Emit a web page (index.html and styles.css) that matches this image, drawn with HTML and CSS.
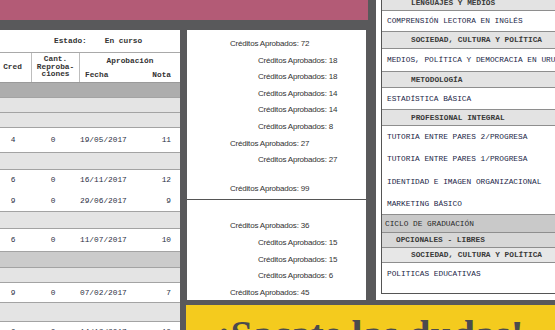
FILE: index.html
```html
<!DOCTYPE html>
<html lang="es">
<head>
<meta charset="utf-8">
<title>Escolaridad</title>
<link rel="stylesheet" href="styles.css">
</head>
<body>
<div class="page">
  <div class="banner"></div>

  <section class="left">
    <div class="estado"><span>Estado:</span><span>En curso</span></div>
    <div class="thead">
      <div class="th cred">Cred</div>
      <div class="th cant">Cant.<br>Reproba-<br>ciones</div>
      <div class="th aprob">
        <div class="aprob-title">Aprobación</div>
        <div class="aprob-sub"><span>Fecha</span><span>Nota</span></div>
      </div>
    </div>
    <div class="row g-dark h15"></div>
    <div class="row g-light h15"></div>
    <div class="row g-light h15"></div>
    <div class="row course h25"><span class="c1">4</span><span class="c2">0</span><span class="c3">19/05/2017</span><span class="c4">11</span></div>
    <div class="row g-light h17"></div>
    <div class="row course cont h20"><span class="c1">6</span><span class="c2">0</span><span class="c3">16/11/2017</span><span class="c4">12</span></div>
    <div class="row course h22"><span class="c1">9</span><span class="c2">0</span><span class="c3">29/06/2017</span><span class="c4">9</span></div>
    <div class="row g-light h17"></div>
    <div class="row course h23"><span class="c1">6</span><span class="c2">0</span><span class="c3">11/07/2017</span><span class="c4">10</span></div>
    <div class="row g-mid h16"></div>
    <div class="row g-light h15"></div>
    <div class="row course h20"><span class="c1">9</span><span class="c2">0</span><span class="c3">07/02/2017</span><span class="c4">7</span></div>
    <div class="row g-light h19"></div>
    <div class="row course h20"><span class="c1">6</span><span class="c2">0</span><span class="c3">14/12/2017</span><span class="c4">10</span></div>
  </section>

  <section class="mid">
    <div class="block first">
      <p class="l1">Créditos Aprobados: 72</p>
      <p class="l2">Créditos Aprobados: 18</p>
      <p class="l2">Créditos Aprobados: 18</p>
      <p class="l2">Créditos Aprobados: 14</p>
      <p class="l2">Créditos Aprobados: 14</p>
      <p class="l2">Créditos Aprobados: 8</p>
      <p class="l1">Créditos Aprobados: 27</p>
      <p class="l2">Créditos Aprobados: 27</p>
      <p class="l1 total">Créditos Aprobados: 99</p>
    </div>
    <div class="block second">
      <p class="l1">Créditos Aprobados: 36</p>
      <p class="l2">Créditos Aprobados: 15</p>
      <p class="l2">Créditos Aprobados: 15</p>
      <p class="l2">Créditos Aprobados: 6</p>
      <p class="l1">Créditos Aprobados: 45</p>
    </div>
  </section>

  <section class="right">
    <div class="rtable">
      <div class="r hd h16">LENGUAJES Y MEDIOS</div>
      <div class="r it h21">COMPRENSIÓN LECTORA EN INGLÉS</div>
      <div class="r hd h17">SOCIEDAD, CULTURA Y POLÍTICA</div>
      <div class="r it h23">MEDIOS, POLÍTICA Y DEMOCRACIA EN URUGUAY</div>
      <div class="r hd h16">METODOLOGÍA</div>
      <div class="r it h22">ESTADÍSTICA BÁSICA</div>
      <div class="r hd h16">PROFESIONAL INTEGRAL</div>
      <div class="r it cont h22">TUTORIA ENTRE PARES 2/PROGRESA</div>
      <div class="r it cont h23">TUTORIA ENTRE PARES 1/PROGRESA</div>
      <div class="r it cont h22">IDENTIDAD E IMAGEN ORGANIZACIONAL</div>
      <div class="r it h22">MARKETING BÁSICO</div>
      <div class="r ciclo h18">CICLO DE GRADUACIÓN</div>
      <div class="r opc h15">OPCIONALES - LIBRES</div>
      <div class="r hd soc h15">SOCIEDAD, CULTURA Y POLÍTICA</div>
      <div class="r it last h30">POLITICAS EDUCATIVAS</div>
    </div>
  </section>

  <div class="yellow"><span>¡Sacate las dudas!</span></div>
</div>
</body>
</html>
```

FILE: styles.css
```css
* {
  box-sizing: border-box;
  margin: 0;
  padding: 0;
}

html, body {
  width: 555px;
  height: 330px;
  overflow: hidden;
}

body {
  background: #59595b;
  font-family: "Liberation Mono", "Courier New", monospace;
}

.page {
  display: grid;
  grid-template-columns: 180px 7px 179px 10px 1fr;
  grid-template-rows: 20px 10px 270px 5px 1fr;
  width: 555px;
  height: 330px;
}

.banner {
  grid-row: 1;
  grid-column: 1 / 4;
  margin-right: -2px;
  background: #b35b76;
}

/* ---------- left table ---------- */
.left {
  grid-row: 3 / 6;
  grid-column: 1;
  background: #fff;
  overflow: hidden;
  font-size: 7.8px;
  color: #2b2f45;
}

.estado {
  height: 23px;
  display: flex;
  align-items: center;
  gap: 18px;
  padding-left: 54px;
  border-bottom: 1px solid #a9a9a9;
  font-weight: bold;
  color: #333;
}

.thead {
  height: 30px;
  display: grid;
  grid-template-columns: 32px 48px 1fr;
  border-bottom: 1px solid #9a9a9a;
  font-weight: bold;
  color: #333;
}

.th {
  line-height: 7.5px;
}

.cred {
  display: flex;
  align-items: center;
  justify-content: center;
  padding-right: 6px;
  border-right: 1px solid #bdbdbd;
}

.cant {
  display: flex;
  align-items: center;
  justify-content: center;
  text-align: center;
  border-right: 1px solid #bdbdbd;
}

.aprob {
  padding-top: 4px;
}

.aprob-title {
  line-height: 9px;
  text-align: center;
}

.aprob-sub {
  margin-top: 5px;
  line-height: 9px;
  display: flex;
  justify-content: space-between;
  padding: 0 9px 0 5px;
}

.row {
  display: grid;
  grid-template-columns: 26px 54px 1fr 40px;
  align-items: center;
  border-bottom: 1px solid #a3a3a3;
}

.row.cont {
  border-bottom-color: transparent;
}

.g-dark { background: #adadad; }
.g-mid { background: #cbcbcb; }
.g-light { background: #e4e4e4; }
.course { background: #fff; }

.c1, .c2 { text-align: center; }
.c4 { text-align: right; padding-right: 9px; }

.h15 { height: 15px; }
.h16 { height: 16px; }
.h17 { height: 17px; }
.h18 { height: 18px; }
.h19 { height: 19px; }
.h20 { height: 20px; }
.h21 { height: 21px; }
.h22 { height: 22px; }
.h23 { height: 23px; }
.h25 { height: 25px; }
.h30 { height: 30px; }

/* ---------- middle ---------- */
.mid {
  grid-row: 3;
  grid-column: 3;
  background: #fff;
  font-family: "Liberation Sans", Arial, sans-serif;
  font-size: 8px;
  letter-spacing: -0.2px;
  color: #333;
  overflow: hidden;
}

.block p {
  line-height: 16.6px;
  white-space: nowrap;
}

.block.first {
  padding: 6px 0 2px;
  border-bottom: 1px solid #555;
}

.block.second {
  padding-top: 18px;
}

.l1 { padding-left: 43px; }
.l2 { padding-left: 71px; }
.total { margin-top: 12px; }

/* ---------- right ---------- */
.right {
  grid-row: 1 / 4;
  grid-column: 5;
  background: #fff;
  padding: 0 0 6px 5px;
  overflow: hidden;
  font-size: 7.8px;
}

.rtable {
  margin-top: -5px;
  border-left: 1px solid #555;
  border-bottom: 1px solid #555;
  display: flex;
  flex-direction: column;
  white-space: nowrap;
}

.r {
  display: flex;
  align-items: center;
  border-bottom: 1px solid #8e8e8e;
}

.r.cont, .r.last {
  border-bottom-color: transparent;
}

.r.last {
  align-items: flex-start;
  padding-top: 6px;
  line-height: 10px;
}

.hd {
  background: #e3e3e3;
  padding-left: 29px;
  font-weight: bold;
  color: #3a3a3a;
}

.it {
  padding-left: 5px;
  color: #1d2748;
}

.ciclo {
  background: #c9c9c9;
  padding-left: 3px;
  color: #2a2a2a;
}

.opc {
  background: #d7d7d7;
  padding-left: 14px;
  font-weight: bold;
  color: #3a3a3a;
}

.hd.soc {
  background: #e7e7e7;
}

/* ---------- yellow banner ---------- */
.yellow {
  grid-row: 5;
  grid-column: 3 / 6;
  margin-left: -1px;
  background: #f4cb1e;
  overflow: hidden;
  text-align: center;
  white-space: nowrap;
  padding-top: 10px;
  font-family: "Liberation Serif", "Times New Roman", serif;
  font-weight: bold;
  font-size: 40px;
  line-height: 40px;
  color: #4b4b4d;
}
```
